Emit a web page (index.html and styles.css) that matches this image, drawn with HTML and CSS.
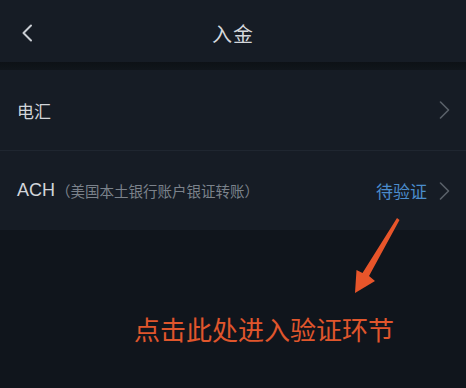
FILE: index.html
```html
<!DOCTYPE html>
<html lang="zh-CN">
<head>
<meta charset="utf-8">
<title>入金</title>
<link rel="stylesheet" href="styles.css">
</head>
<body>
<div class="page">
  <header class="topbar">
    <span class="back">
      <svg width="12" height="18" viewBox="0 0 12 18"><path d="M10 1.5 L2.5 9 L10 16.5" fill="none" stroke="#c9cdd3" stroke-width="2" stroke-linecap="round" stroke-linejoin="round"/></svg>
    </span>
    <h1 class="title">入金</h1>
  </header>
  <div class="band"></div>
  <ul class="list">
    <li class="row">
      <span class="label">电汇</span>
      <span class="right">
        <svg class="chev" width="11" height="18" viewBox="0 0 11 18"><path d="M1.5 1 L9.5 9 L1.5 17" fill="none" stroke="#5a6169" stroke-width="1.6" stroke-linecap="round" stroke-linejoin="round"/></svg>
      </span>
    </li>
    <li class="row">
      <span class="label"><span class="code">ACH</span><span class="sub">（美国本土银行账户银证转账）</span></span>
      <span class="right">
        <span class="status">待验证</span>
        <svg class="chev" width="11" height="18" viewBox="0 0 11 18"><path d="M1.5 1 L9.5 9 L1.5 17" fill="none" stroke="#5a6169" stroke-width="1.6" stroke-linecap="round" stroke-linejoin="round"/></svg>
      </span>
    </li>
  </ul>
  <section class="hint">
    <svg class="arrow" width="60" height="80" viewBox="0 0 60 80"><path d="M56 2 L58.5 4 L28 60 L34 65 L14 77 L15.5 54 L21.5 57 Z" fill="#e8552a"/></svg>
    <p class="hint-text">点击此处进入验证环节</p>
  </section>
</div>
</body>
</html>
```

FILE: styles.css
```css
html, body {
  margin: 0;
  padding: 0;
  background: #10151c;
}
body {
  font-family: "Noto Sans CJK SC", "Noto Sans", sans-serif;
  width: 466px;
  height: 388px;
  overflow: hidden;
}
.page {
  display: flex;
  flex-direction: column;
  height: 388px;
}
.topbar {
  height: 62px;
  background: #161c25;
  display: flex;
  align-items: center;
  justify-content: center;
  position: relative;
}
.back {
  position: absolute;
  left: 21px;
  top: 24px;
  display: flex;
}
.title {
  margin: 4px 0 0 0;
  font-size: 20px;
  font-weight: 400;
  color: #d4d7dc;
  letter-spacing: 1px;
}
.band {
  height: 8px;
  background: linear-gradient(#0d1116, #10151b);
}
.list {
  list-style: none;
  margin: 0;
  padding: 0;
  background: #161c25;
}
.row {
  height: 80px;
  display: flex;
  align-items: center;
  justify-content: space-between;
  padding: 0 16px 0 17px;
}
.row + .row {
  border-top: 1px solid #1f2630;
  height: 79px;
}
.label {
  font-size: 17px;
  color: #d2d5da;
  display: flex;
  align-items: center;
}
.code {
  font-family: "Liberation Sans", "Noto Sans", sans-serif;
  font-size: 18px;
}
.sub {
  font-size: 14.5px;
  color: #7b828b;
  margin-left: 1px;
}
.right {
  display: flex;
  align-items: center;
  gap: 12px;
}
.status {
  font-size: 17px;
  color: #4b8ccc;
}
.chev {
  display: block;
}
.hint {
  flex: 1;
  position: relative;
  background: #10151c;
  padding-top: 84px;
}
.arrow {
  position: absolute;
  left: 341px;
  top: -14px;
}
.hint-text {
  margin: 0 0 0 134px;
  font-size: 26px;
  line-height: 30px;
  color: #e0562c;
  letter-spacing: 0;
}
```
